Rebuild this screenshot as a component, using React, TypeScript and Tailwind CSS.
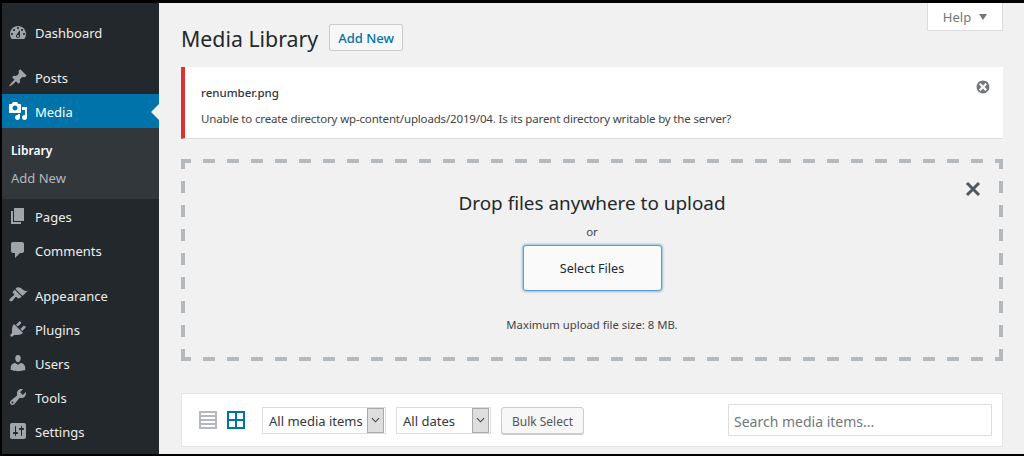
const menuTop = [
  {
    label: "Dashboard",
    d: "M3.76 16h12.48c1.1-1.37 1.76-3.11 1.76-5 0-4.42-3.58-8-8-8s-8 3.58-8 8c0 1.89.66 3.63 1.76 5zM10 4c.55 0 1 .45 1 1s-.45 1-1 1-1-.45-1-1 .45-1 1-1zM6 6c.55 0 1 .45 1 1s-.45 1-1 1-1-.45-1-1 .45-1 1-1zm8 0c.55 0 1 .45 1 1s-.45 1-1 1-1-.45-1-1 .45-1 1-1zm-5.37 5.55L12 7v6c0 1.1-.9 2-2 2s-2-.9-2-2c0-.57.24-1.08.63-1.45zM4 10c.55 0 1 .45 1 1s-.45 1-1 1-1-.45-1-1 .45-1 1-1zm12 0c.55 0 1 .45 1 1s-.45 1-1 1-1-.45-1-1 .45-1 1-1zm-5 3c0-.55-.45-1-1-1s-1 .45-1 1 .45 1 1 1 1-.45 1-1z",
  },
];

const postIcon =
  "M10.44 3.02l1.82-1.82 6.36 6.35-1.83 1.82c-1.05-.68-2.48-.57-3.41.36l-.75.75c-.92.93-1.04 2.35-.35 3.41l-1.83 1.82-2.41-2.41-2.8 2.79c-.42.42-3.38 2.71-3.8 2.29s1.86-3.39 2.28-3.81l2.79-2.79L4.1 9.36l1.83-1.82c1.05.69 2.48.57 3.4-.36l.75-.75c.93-.92 1.05-2.35.36-3.41z";
const mediaIcon =
  "M13 11V4c0-.55-.45-1-1-1h-1.67L9 1H5L3.67 3H2c-.55 0-1 .45-1 1v7c0 .55.45 1 1 1h10c.55 0 1-.45 1-1zM7 4.5c1.38 0 2.5 1.12 2.5 2.5S8.38 9.5 7 9.5 4.5 8.38 4.5 7 5.62 4.5 7 4.5zM14 6h5v10.5c0 1.38-1.12 2.5-2.5 2.5S14 17.88 14 16.5s1.12-2.5 2.5-2.5c.17 0 .34.02.5.05V9h-3V6zm-4 8.05V13h2v3.5c0 1.38-1.12 2.5-2.5 2.5S7 17.88 7 16.5 8.12 14 9.5 14c.17 0 .34.02.5.05z";

const menuMid = [
  { label: "Pages", d: "M6 15V2h10v13H6zm-1 1h8v2H3V5h2v11z" },
  { label: "Comments", d: "M5 2h9c1.1 0 2 .9 2 2v7c0 1.1-.9 2-2 2h-2l-5 5v-5H5c-1.1 0-2-.9-2-2V4c0-1.1.9-2 2-2z" },
];

const menuBottom = [
  {
    label: "Appearance",
    d: "M14.48 11.06L7.41 3.99l1.5-1.5c.5-.56 2.3-.47 3.51.32 1.21.8 1.43 1.28 2.91 2.1 1.18.64 2.45 1.26 4.45.85zm-.71.71L6.7 4.7 4.93 6.47c-.39.39-.39 1.02 0 1.41l1.06 1.06c.39.39.39 1.03 0 1.42-.6.6-1.43 1.11-2.21 1.69-.35.26-.7.53-1.01.84C1.43 13.71.96 15.12 1.75 15.91c.8.8 2.21.33 3.04-.5.31-.31.58-.66.84-1.01.58-.78 1.09-1.61 1.69-2.21.39-.39 1.02-.39 1.41 0l1.06 1.06c.39.39 1.02.39 1.41 0z",
  },
  {
    label: "Plugins",
    d: "M13.11 4.36L9.87 7.6 8 5.73l3.24-3.24c.35-.34 1.05-.2 1.56.32.52.51.66 1.21.31 1.55zm-8 1.77l.91-1.12 9.01 9.01-1.19.84c-.71.71-2.63 1.16-3.82 1.16H6.14L4.9 17.26c-.59.59-1.54.59-2.12 0-.59-.58-.59-1.53 0-2.12l1.24-1.24v-3.88c0-1.13.4-3.19 1.09-3.89zm7.26 3.97l3.24-3.24c.34-.35 1.04-.21 1.55.31.52.51.66 1.21.31 1.55l-3.24 3.25z",
  },
  {
    label: "Users",
    d: "M10 9.25c-2.27 0-2.73-3.44-2.73-3.44C7 4.02 7.82 2 9.97 2c2.16 0 2.98 2.02 2.71 3.81 0 0-.41 3.44-2.68 3.44zm0 2.57L12.72 10c2.39 0 4.52 2.33 4.52 4.53v2.49s-3.65 1.13-7.24 1.13c-3.65 0-7.24-1.13-7.24-1.13v-2.49c0-2.25 1.94-4.48 4.47-4.48z",
  },
  {
    label: "Tools",
    d: "M16.68 9.77c-1.34 1.34-3.3 1.67-4.95.99l-5.41 6.52c-.99.99-2.59.99-3.58 0s-.99-2.59 0-3.57l6.52-5.42c-.68-1.65-.35-3.61.99-4.95 1.28-1.28 3.12-1.62 4.72-1.06l-2.89 2.89 2.82 2.82 2.86-2.87c.53 1.58.18 3.39-1.08 4.65zM3.81 16.21c.4.39 1.04.39 1.43 0 .4-.4.4-1.04 0-1.43-.39-.4-1.03-.4-1.43 0-.39.39-.39 1.03 0 1.43z",
  },
  {
    label: "Settings",
    d: "M18 16V4c0-1.1-.9-2-2-2H4c-1.1 0-2 .9-2 2v12c0 1.1.9 2 2 2h12c1.1 0 2-.9 2-2zM8 11h1c.55 0 1 .45 1 1s-.45 1-1 1H8v1.5c0 .28-.22.5-.5.5s-.5-.22-.5-.5V13H6c-.55 0-1-.45-1-1s.45-1 1-1h1V5.5c0-.28.22-.5.5-.5s.5.22.5.5V11zm5-2h-1c-.55 0-1-.45-1-1s.45-1 1-1h1V5.5c0-.28.22-.5.5-.5s.5.22.5.5V7h1c.55 0 1 .45 1 1s-.45 1-1 1h-1v5.5c0 .28-.22.5-.5.5s-.5-.22-.5-.5V9z",
  },
];

function MenuIcon({ d, active }: { d: string; active?: boolean }) {
  return (
    <svg
      viewBox="0 0 20 20"
      className={active ? "h-5 w-5 fill-white" : "h-5 w-5 fill-[#a0a5aa]"}
    >
      <path d={d} />
    </svg>
  );
}

function MenuRow({ label, d, high }: { label: string; d: string; high?: boolean }) {
  return (
    <div className="flex h-[34px] items-center pl-[6px] text-[#eeeeee]">
      <MenuIcon d={d} />
      <span className={high ? "ml-[7px] pt-[1px]" : "ml-[7px] pt-[3px]"}>{label}</span>
    </div>
  );
}

function Sidebar() {
  return (
    <div className="h-full w-[157px] shrink-0 bg-[#23282d] pt-[13px] text-[13px]">
      {menuTop.map((m) => (
        <MenuRow key={m.label} {...m} high />
      ))}
      <div className="h-[11px]" />
      <MenuRow label="Posts" d={postIcon} high />
      <div className="relative -mt-px flex h-[34px] items-center bg-[#0073aa] pl-[6px] text-white">
        <MenuIcon d={mediaIcon} active />
        <span className="ml-[7px] pt-[3px]">Media</span>
        <div className="absolute right-0 top-[10px] h-0 w-0 border-y-[8px] border-r-[8px] border-y-transparent border-r-[#f1f1f1]" />
      </div>
      <div className="flex h-[71px] flex-col bg-[#32373c] pl-[9px] pt-[9px]">
        <div className="flex h-[28px] items-center text-[12px] font-semibold text-white">Library</div>
        <div className="flex h-[28px] items-center text-[13px] text-[#b4b9be]">Add New</div>
      </div>
      {menuMid.map((m) => (
        <MenuRow key={m.label} {...m} />
      ))}
      <div className="h-[11px]" />
      {menuBottom.map((m) => (
        <MenuRow key={m.label} {...m} />
      ))}
    </div>
  );
}

function Chevron() {
  return (
    <div className="flex h-full w-[17px] shrink-0 items-center justify-center border border-[#a9a9a9] bg-[#dedede]">
      <svg viewBox="0 0 10 6" className="h-[6px] w-[9px] fill-none stroke-[#444] stroke-[1.2]">
        <path d="M1 1l4 4 4-4" />
      </svg>
    </div>
  );
}

function Select({ label, width }: { label: string; width: string }) {
  return (
    <div className={`flex h-[27px] items-center justify-between whitespace-nowrap border border-[#dddddd] bg-white pl-[6px] pr-px text-[13px] text-[#32373c] ${width}`}>
      <span className="pt-[3px]">{label}</span>
      <Chevron />
    </div>
  );
}

function Main() {
  return (
    <div className="relative flex-1 bg-[#f1f1f1] pl-[22px] pr-[21px] text-[13px] text-[#444444]">
      {/* Help tab */}
      <div className="absolute right-[21px] top-0 flex h-[28px] w-[76px] items-center justify-center gap-[8px] border-x border-b border-[#dddddd] bg-white text-[#72777c]">
        <span className="pt-[3px] text-[13px]">Help</span>
        <div className="h-0 w-0 border-x-[4px] border-t-[6px] border-x-transparent border-t-[#72777c]" />
      </div>

      <div className="flex items-start pt-[20px]">
        <h1 className="pt-[1px] text-[21.3px] leading-[29px] text-[#23282d]">Media Library</h1>
        <div className="ml-[11px] mt-[1px] flex h-[27px] w-[74px] items-center justify-center rounded-[2px] border border-[#cccccc] bg-[#f7f7f7] pt-[2px] text-[13px] font-medium text-[#0073aa]">
          Add New
        </div>
      </div>

      {/* Error notice */}
      <div className="relative mt-[14px] h-[72px] border-b border-[#dddddd] border-l-4 border-l-[#dc3232] bg-white pl-[16px] pt-[16px]">
        <div className="text-[11.5px] font-medium leading-[20px] text-[#32373c]">renumber.png</div>
        <div className="mt-[6px] text-[11.5px] leading-[20px] tracking-[-0.16px] text-[#444444]">
          Unable to create directory wp-content/uploads/2019/04. Is its parent directory writable by the server?
        </div>
        <svg viewBox="0 0 20 20" className="absolute right-[12px] top-[12px] h-4 w-4 fill-[#72777c]">
          <path d="M10 2c4.42 0 8 3.58 8 8s-3.58 8-8 8-8-3.58-8-8 3.58-8 8-8zm5 11l-3-3 3-3-2-2-3 3-3-3-2 2 3 3-3 3 2 2 3-3 3 3z" />
        </svg>
      </div>

      {/* Upload area */}
      <div className="relative mt-[20px] flex h-[202px] flex-col items-center [background-image:linear-gradient(90deg,#b4b9be_50%,transparent_50%),linear-gradient(90deg,#b4b9be_50%,transparent_50%),linear-gradient(180deg,#b4b9be_50%,transparent_50%),linear-gradient(180deg,#b4b9be_50%,transparent_50%)] [background-position:-2px_0,-2px_100%,0_-2px,100%_-2px] [background-repeat:repeat-x,repeat-x,repeat-y,repeat-y] [background-size:24px_4px,24px_4px,4px_24px,4px_24px]">
        <div className="mt-[29px] text-[18.9px] leading-[30px] text-[#23282d]">Drop files anywhere to upload</div>
        <div className="mt-[6px] text-[11.5px] leading-[16px] text-[#444444]">or</div>
        <div className="mt-[5px] flex h-[46px] w-[139px] items-center justify-center rounded-[3px] border border-[#5b9dd9] bg-[#fafafa] pt-[2px] text-[12.6px] text-[#23282d] shadow-[0_0_3px_rgba(0,115,170,.8)]">
          Select Files
        </div>
        <div className="mt-[26px] text-[11.3px] leading-[16px] text-[#444444]">Maximum upload file size: 8 MB.</div>
        <svg viewBox="0 0 16 16" className="absolute right-[22px] top-[22px] h-4 w-4 fill-none stroke-[#50575e] stroke-[3]">
          <path d="M2 2l12 12M14 2L2 14" />
        </svg>
      </div>

      {/* Toolbar */}
      <div className="mt-[32px] flex h-[54px] items-center border border-[#e5e5e5] bg-white pl-[17px] pr-[10px]">
        <svg viewBox="0 0 18 18" className="h-[18px] w-[18px] fill-none stroke-[#b4b9be] stroke-2">
          <path d="M1 1h16v16H1zM1 5h16M1 9h16M1 13h16" />
        </svg>
        <svg viewBox="0 0 18 18" className="ml-[10px] h-[18px] w-[18px] fill-none stroke-[#0073aa] stroke-2">
          <path d="M1 1h16v16H1zM9 1v16M1 9h16" />
        </svg>
        <div className="ml-[17px]">
          <Select label="All media items" width="w-[124px]" />
        </div>
        <div className="ml-[10px]">
          <Select label="All dates" width="w-[95px]" />
        </div>
        <div className="ml-[10px] flex h-[27px] w-[83px] items-center justify-center rounded-[3px] border border-[#cccccc] bg-[#f7f7f7] pt-[3px] text-[12px] text-[#555555] shadow-[0_1px_0_#cccccc]">
          Bulk Select
        </div>
        <div className="ml-auto flex h-[32px] w-[264px] items-center border border-[#dddddd] bg-white pl-[5px] pt-[2px] text-[14px] text-[#72777c]">
          Search media items...
        </div>
      </div>
    </div>
  );
}

export default function App() {
  return (
    <div className="h-[456px] w-[1024px] overflow-hidden bg-black pb-[2px] pl-[2px] pt-[3px] font-['Noto_Sans','Open_Sans',sans-serif]">
      <div className="flex h-full">
        <Sidebar />
        <Main />
      </div>
    </div>
  );
}
